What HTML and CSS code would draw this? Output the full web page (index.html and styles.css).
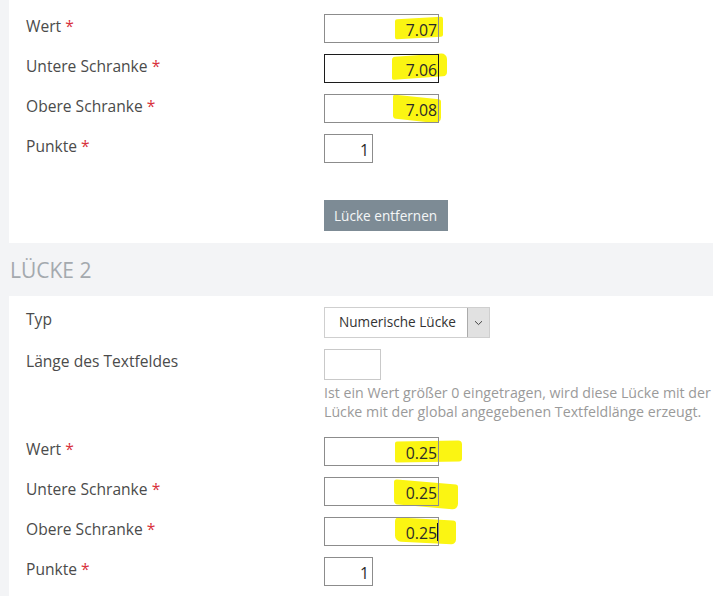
FILE: index.html
```html
<!DOCTYPE html>
<html lang="de">
<head>
<meta charset="utf-8">
<title>Lücken</title>
<link rel="stylesheet" href="styles.css">
</head>
<body>
<div class="page">
  <section class="panel panel-top">
    <div class="form">
      <label class="lbl">Wert <span class="req">*</span></label>
      <div class="field wide"><span class="mark m1"></span><input class="inp" value="7.07"></div>

      <label class="lbl">Untere Schranke <span class="req">*</span></label>
      <div class="field wide focus"><span class="mark m2"></span><input class="inp" value="7.06"></div>

      <label class="lbl">Obere Schranke <span class="req">*</span></label>
      <div class="field wide"><span class="mark m3"></span><input class="inp" value="7.08"></div>

      <label class="lbl">Punkte <span class="req">*</span></label>
      <div class="field small"><input class="inp" value="1"></div>

      <span class="lbl"></span>
      <div class="actions"><button class="btn" type="button">Lücke entfernen</button></div>
    </div>
  </section>

  <h2 class="gap-title">LÜCKE 2</h2>

  <section class="panel panel-bottom">
    <div class="form">
      <label class="lbl">Typ</label>
      <div class="select">
        <span class="select-text">Numerische Lücke</span>
        <span class="select-arrow"><svg width="9" height="6" viewBox="0 0 9 6"><path d="M1 1.2 L4.5 4.6 L8 1.2" fill="none" stroke="#444" stroke-width="1"/></svg></span>
      </div>

      <label class="lbl">Länge des Textfeldes</label>
      <div class="stack">
        <div class="field len"><input class="inp" value=""></div>
        <p class="help">Ist ein Wert größer 0 eingetragen, wird diese Lücke mit der<br>Lücke mit der global angegebenen Textfeldlänge erzeugt.</p>
      </div>

      <label class="lbl">Wert <span class="req">*</span></label>
      <div class="field wide"><span class="mark m4"></span><input class="inp" value="0.25"></div>

      <label class="lbl">Untere Schranke <span class="req">*</span></label>
      <div class="field wide"><span class="mark m5"></span><input class="inp" value="0.25"></div>

      <label class="lbl">Obere Schranke <span class="req">*</span></label>
      <div class="field wide caret"><span class="mark m6"></span><input class="inp" value="0.25"></div>

      <label class="lbl">Punkte <span class="req">*</span></label>
      <div class="field small"><input class="inp" value="1"></div>
    </div>
  </section>
</div>
</body>
</html>
```

FILE: styles.css
```css
html, body {
  margin: 0;
  padding: 0;
}
body {
  background: #f3f4f6;
  font-family: "Open Sans", "Liberation Sans", sans-serif;
  color: #4a4a4a;
  overflow: hidden;
  width: 713px;
  height: 596px;
}
.page {
  padding-left: 9px;
}
.panel {
  background: #ffffff;
  padding-left: 17px;
}
.panel-top {
  padding-top: 14px;
  padding-bottom: 12px;
}
.panel-bottom {
  padding-top: 11px;
  padding-bottom: 20px;
}
.form {
  display: grid;
  grid-template-columns: 298px auto;
  row-gap: 11px;
  align-items: start;
  justify-items: start;
}
.lbl {
  font-size: 15.6px;
  line-height: 22px;
  padding-top: 1px;
  color: #4b4b4b;
  white-space: nowrap;
}
.req {
  color: #d8323c;
}
.field {
  position: relative;
  background: #fff;
  height: 29px;
  box-sizing: border-box;
}
.field::after {
  content: "";
  position: absolute;
  inset: 0;
  border: 1px solid #8c8c8c;
  pointer-events: none;
  z-index: 3;
}
.field.focus::after {
  border-color: #1c1c1c;
}
.field.wide { width: 115px; }
.field.small { width: 49px; }
.field.len { width: 57px; height: 31px; }
.field.len::after { border-color: #c9c9c9; }
.inp {
  position: relative;
  z-index: 2;
  display: block;
  width: 100%;
  height: 100%;
  box-sizing: border-box;
  margin: 0;
  border: 0;
  background: transparent;
  font-family: "Open Sans", "Liberation Sans", sans-serif;
  font-size: 15.8px;
  line-height: 23px;
  padding: 4px 2px 2px 2px;
  text-align: right;
  color: #2a2a2a;
  outline: none;
}
.field.small .inp { padding-right: 4px; }
.mark {
  position: absolute;
  z-index: 1;
  background: #fbf512;
  border-radius: 2px;
}
.m1 { left: 71px; top: 4px; width: 48px; height: 20px; transform: skewY(-3deg); }
.m2 { left: 68px; top: 1px; width: 55px; height: 23px; transform: skewY(-4deg); border-radius: 3px 6px 4px 2px; }
.m3 { left: 69px; top: 3px; width: 48px; height: 24px; transform: skewY(6deg); border-radius: 2px 2px 6px 3px; }
.m4 { left: 71px; top: 4px; width: 67px; height: 21px; transform: skewY(-1deg); border-radius: 2px 4px 3px 2px; }
.m5 { left: 70px; top: 5px; width: 64px; height: 25px; transform: skewY(5deg); border-radius: 3px 2px 6px 4px; }
.m6 { left: 71px; top: 2px; width: 61px; height: 24px; transform: skewY(3deg); border-radius: 4px 3px 5px 6px; }
.field.caret::before {
  content: "";
  position: absolute;
  z-index: 4;
  left: 113px;
  top: 6px;
  width: 1px;
  height: 18px;
  background: #111;
}
.actions {
  margin-top: 26px;
}
.btn {
  display: block;
  height: 31px;
  padding: 0 11px 0 10px;
  border: 0;
  background: #7d8b95;
  color: #f4f6f7;
  font-family: "Open Sans", "Liberation Sans", sans-serif;
  font-size: 13.6px;
  line-height: 31px;
}
.gap-title {
  margin: 0;
  height: 51px;
  padding: 2px 0 0 1px;
  font-size: 21px;
  line-height: 51px;
  font-weight: 400;
  color: #a4a9ae;
}
.select {
  display: flex;
  width: 166px;
  height: 31px;
  box-sizing: border-box;
  border: 1px solid #cfcfcf;
  background: #fff;
}
.select-text {
  flex: 1;
  padding-left: 14px;
  font-size: 13.6px;
  line-height: 28px;
  color: #333;
  white-space: nowrap;
}
.select-arrow {
  width: 21px;
  display: flex;
  align-items: center;
  justify-content: center;
  background: #e1e1e1;
  border-left: 1px solid #ababab;
}
.stack {
  display: flex;
  flex-direction: column;
}
.help {
  margin: 3px 0 5px 0;
  font-size: 14.2px;
  line-height: 19px;
  color: #9a9a9a;
  white-space: nowrap;
}
```
